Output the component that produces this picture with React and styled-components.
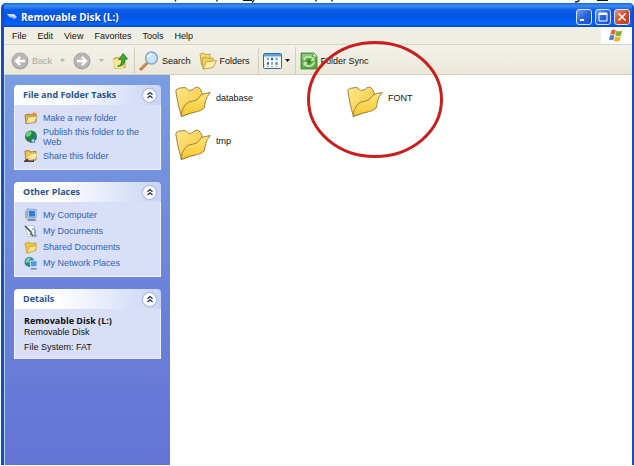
import React, { useState } from "react";
import styled, { createGlobalStyle } from "styled-components";

const menuItems = ["File", "Edit", "View", "Favorites", "Tools", "Help"];

const files = [
  { name: "database" },
  { name: "FONT", marked: true },
  { name: "tmp" },
];

const App = () => {
  const [closed, setClosed] = useState({});

  const togglePanel = (id) => {
    setClosed({ ...closed, [id]: !closed[id] });
  };

  return (
    <Page>
      <GlobalStyle />
      <TopStrip>
        <StripMarks />
      </TopStrip>
      <Window>
        <TitleBar>
          <DriveIcon />
          <h1>Removable Disk (L:)</h1>
          <WindowButton aria-label="Minimize">
            <svg viewBox="0 0 14 14">
              <path d="M3 10h4" stroke="#fff" strokeWidth="2" />
            </svg>
          </WindowButton>
          <WindowButton aria-label="Maximize">
            <svg viewBox="0 0 14 14">
              <path d="M3 3h8v8H3z" fill="none" stroke="#fff" />
              <path d="M3 4h8" stroke="#fff" strokeWidth="2" />
            </svg>
          </WindowButton>
          <WindowButton aria-label="Close" $close>
            <svg viewBox="0 0 14 14">
              <path
                d="M3.5 3.5l7 7M10.5 3.5l-7 7"
                stroke="#fff"
                strokeWidth="1.6"
              />
            </svg>
          </WindowButton>
        </TitleBar>

        <MenuBar>
          {menuItems.map((item) => (
            <MenuButton key={item}>{item}</MenuButton>
          ))}
          <FlagBox>
            <FlagIcon />
          </FlagBox>
        </MenuBar>

        <ToolBar>
          <ToolButton disabled>
            <ArrowIcon />
            Back
          </ToolButton>
          <DropButton aria-label="Back history" disabled>
            <Caret />
          </DropButton>
          <ToolButton aria-label="Forward" disabled>
            <ArrowIcon forward />
          </ToolButton>
          <DropButton aria-label="Forward history" disabled>
            <Caret />
          </DropButton>
          <ToolButton aria-label="Up">
            <UpIcon />
          </ToolButton>
          <Divider />
          <ToolButton>
            <SearchIcon />
            Search
          </ToolButton>
          <ToolButton $spaced>
            <FoldersIcon />
            Folders
          </ToolButton>
          <Divider $wide />
          <ToolButton aria-label="Views">
            <ViewsIcon />
            <Caret />
          </ToolButton>
          <Divider />
          <ToolButton>
            <SyncIcon />
            Folder Sync
          </ToolButton>
        </ToolBar>

        <Content>
          <Sidebar>
            <Panel
              title="File and Folder Tasks"
              closed={closed.tasks}
              onToggle={() => togglePanel("tasks")}
            >
              <LinkList>
                <li>
                  <SideLink href="#new">
                    <NewFolderIcon />
                    Make a new folder
                  </SideLink>
                </li>
                <li>
                  <SideLink href="#publish">
                    <GlobeIcon />
                    Publish this folder to the Web
                  </SideLink>
                </li>
                <li>
                  <SideLink href="#share">
                    <ShareIcon />
                    Share this folder
                  </SideLink>
                </li>
              </LinkList>
            </Panel>

            <Panel
              title="Other Places"
              closed={closed.places}
              onToggle={() => togglePanel("places")}
            >
              <LinkList>
                <li>
                  <SideLink href="#computer">
                    <ComputerIcon />
                    My Computer
                  </SideLink>
                </li>
                <li>
                  <SideLink href="#documents">
                    <DocumentsIcon />
                    My Documents
                  </SideLink>
                </li>
                <li>
                  <SideLink href="#shared">
                    <SharedIcon />
                    Shared Documents
                  </SideLink>
                </li>
                <li>
                  <SideLink href="#network">
                    <NetworkIcon />
                    My Network Places
                  </SideLink>
                </li>
              </LinkList>
            </Panel>

            <Panel
              title="Details"
              closed={closed.details}
              onToggle={() => togglePanel("details")}
            >
              <Details>
                <strong>Removable Disk (L:)</strong>
                <span>Removable Disk</span>
                <p>File System: FAT</p>
              </Details>
            </Panel>
          </Sidebar>

          <FileList>
            {files.map((file) => (
              <FileItem key={file.name}>
                <FileButton>
                  <FolderIcon id={file.name} />
                  <span>{file.name}</span>
                </FileButton>
                {file.marked && (
                  <Ring viewBox="0 0 136 117">
                    <ellipse cx="68" cy="58.5" rx="66.5" ry="57" />
                  </Ring>
                )}
              </FileItem>
            ))}
          </FileList>
        </Content>
      </Window>
    </Page>
  );
};

export default App;

const Panel = ({ title, closed, onToggle, children }) => (
  <PanelBox>
    <PanelHead>
      <h2>{title}</h2>
      <RoundButton aria-label={"Toggle " + title} onClick={onToggle}>
        <svg viewBox="0 0 8 8">
          <path
            d="M1.5 3.8L4 1.5l2.5 2.3M1.5 7L4 4.7L6.5 7"
            fill="none"
            stroke="#1c2c50"
            strokeWidth="1.2"
          />
        </svg>
      </RoundButton>
    </PanelHead>
    {!closed && <PanelBody>{children}</PanelBody>}
  </PanelBox>
);

// Icons
const StripMarks = () => (
  <svg width="634" height="3" viewBox="0 0 634 3" aria-hidden="true">
    <path
      d="M175.5 0v1.5M217 0v1.5M316 0v1.5M332 0v1.5M254 0l-2 2.5M579 0q0 2-4 2"
      stroke="#222"
      strokeWidth="1.4"
      fill="none"
    />
    <path d="M243 0h9v1h-9zM597 0h11v1h-11z" fill="#111" />
  </svg>
);

const DriveIcon = () => (
  <svg width="12" height="12" viewBox="0 0 12 12">
    <path d="M1 3l7 0 3 3-2 2-6-2z" fill="#9fb4ee" />
    <path d="M1 3l7 .5 2.5 2.5-7-1.5z" fill="#dfe6fb" />
  </svg>
);

const FlagIcon = () => (
  <svg width="16" height="15" viewBox="0 0 16 15">
    <path d="M3.4 2.2q2.4-1.6 4.4 0L6.6 7Q4.4 5.6 2.2 7z" fill="#e0673a" />
    <path d="M8.5 2.6q2.5 1.6 5.7 0L13 7.4q-3 1.6-5.7 0z" fill="#7db13c" />
    <path d="M2 7.7q2.2-1.5 4.4 0L5.2 12.5Q3 11.2.8 12.5z" fill="#4d7fd0" />
    <path d="M7.1 8.2q2.8 1.5 5.7 0L11.6 13q-3 1.6-5.7 0z" fill="#efb62b" />
  </svg>
);

const ArrowIcon = ({ forward }) => (
  <svg width="18" height="18" viewBox="0 0 18 18">
    <circle cx="9" cy="9" r="8.5" fill="#a3a3a1" />
    <circle cx="9" cy="8.5" r="7.4" fill="#b6b6b4" />
    <path
      d={
        forward
          ? "M4 9h8.5M8.8 4.8L13 9l-4.2 4.2"
          : "M14 9H5.5M9.2 4.8L5 9l4.2 4.2"
      }
      fill="none"
      stroke="#fff"
      strokeWidth="2.4"
    />
  </svg>
);

const Caret = () => (
  <svg width="5" height="3" viewBox="0 0 5 3">
    <path d="M0 0h5L2.5 3z" fill="currentColor" />
  </svg>
);

const UpIcon = () => (
  <svg width="17" height="18" viewBox="0 0 18 18">
    <path d="M2 6l5-1 1 1.5 6-.5v10l-11 1z" fill="#f3d35b" stroke="#a98a2c" strokeWidth=".7" />
    <path d="M2 8l10-1v9.5L3 17z" fill="#fbe995" />
    <path
      d="M6 14.5q4.5-1 4.2-7H7L11.8 1 16.5 7h-3.2q.7 8-7.3 7.5z"
      fill="#3fab35"
      stroke="#1d6e20"
      strokeWidth=".8"
    />
  </svg>
);

const SearchIcon = () => (
  <svg width="20" height="20" viewBox="0 0 20 20">
    <path d="M8.5 11.5L2 18" stroke="#b8763a" strokeWidth="3" strokeLinecap="round" />
    <path d="M8 11.5L2 17.3" stroke="#e7b47b" strokeWidth="1" />
    <circle cx="12.5" cy="7" r="5.9" fill="#c9e4f8" stroke="#7fa6cf" strokeWidth="1.5" />
    <path d="M9 6q1-3 4-3.2" stroke="#fff" strokeWidth="1.8" fill="none" />
  </svg>
);

const FoldersIcon = () => (
  <svg width="18" height="18" viewBox="0 0 18 18">
    <path d="M1 2l4-1 1.5 1.5L11 2v8l-8.5 3z" fill="#f6dc6e" stroke="#b9973a" strokeWidth=".8" />
    <path d="M3 6l4-1 1.5 1.5L14 6v9l-10 2z" fill="#f3d25a" stroke="#b9973a" strokeWidth=".8" />
    <path d="M4.5 17l2.5-7L17.5 8.5 14 15.5z" fill="#fdf0a4" stroke="#b9973a" strokeWidth=".8" />
  </svg>
);

const ViewsIcon = () => (
  <svg width="19" height="16" viewBox="0 0 19 16">
    <rect x=".5" y=".5" width="18" height="15" rx="1" fill="#f7fafc" stroke="#2f6aa8" />
    <path d="M1 2.2h17" stroke="#5d9ede" strokeWidth="2.6" />
    <path d="M4 6h2M12.5 6h2M8 10.5h2" stroke="#7fa0c4" strokeWidth="2.5" />
    <path d="M8 6h2M4 10.5h2M12.5 10.5h2" stroke="#37639a" strokeWidth="2.5" />
    <path d="M4 13.5h2M8 13.5h2M12.5 13.5h2" stroke="#b9a06a" strokeWidth="1" />
  </svg>
);

const SyncIcon = () => (
  <svg width="18" height="18" viewBox="0 0 18 18">
    <path d="M1 1h13l3 3v13H1z" fill="#5aa743" stroke="#3c8330" strokeWidth=".8" />
    <path d="M2 2h11l-2 3-9 2z" fill="#8acb6e" />
    <path d="M13.5 1l3.5 3.5h-3.5z" fill="#dff0d6" />
    <path
      d="M3.8 8.5A5.4 5 0 0 1 13 6.5M14.2 10A5.4 5 0 0 1 5 12.5"
      fill="none"
      stroke="#c3e6b0"
      strokeWidth="1.8"
    />
    <path d="M14.5 4.5v4.5H10zM3.5 14.5V10H8z" fill="#c3e6b0" />
    <circle cx="9" cy="9.5" r="2" fill="#39802b" />
  </svg>
);

const NewFolderIcon = () => (
  <svg width="14" height="14" viewBox="0 0 14 14">
    <path d="M1 4l4-1 1 1 6-1v8l-10 1.5z" fill="#dcae45" stroke="#96712a" strokeWidth=".8" />
    <path d="M2 12.5l2-6.5 9-1-2 6.5z" fill="#fae6a0" stroke="#a8822f" strokeWidth=".6" />
    <path d="M10 0l.9 2.1L13.5 3l-2.6.9L10 6l-.9-2.1L6.500 3l2.6-.9z" fill="#f08a3c" />
  </svg>
);

const GlobeIcon = () => (
  <svg width="14" height="14" viewBox="0 0 14 14">
    <circle cx="7" cy="6.5" r="6" fill="#23833f" />
    <path d="M3 2.5q3-2 5 0L6 6 2.5 7q-1.500-2 .5-4.500z" fill="#6fd07f" />
    <path d="M9 4l3 1v4l-3 1z" fill="#2a6fa8" />
    <path d="M6 10h5v2.5H6z" fill="#2f5c8c" />
    <circle cx="9" cy="10.5" r="1.6" fill="#a8d8e8" />
  </svg>
);

const ShareIcon = () => (
  <svg width="14" height="14" viewBox="0 0 14 14">
    <path d="M1 2l4-.5 1 1.5 6-.5V11L2 12z" fill="#f0c64d" stroke="#8d6c22" strokeWidth=".8" />
    <path d="M3 9l5-4 5-.5-2 6z" fill="#fbe9a5" />
    <path d="M0 12q3-3 6-2l4 .5v2.5H0z" fill="#4b4033" />
    <path d="M4 10.5l5 .2" stroke="#f4c49c" strokeWidth="1.4" />
  </svg>
);

const ComputerIcon = () => (
  <svg width="14" height="14" viewBox="0 0 14 14">
    <path d="M3 1l9 .5v8L4 10z" fill="#dfe8f2" stroke="#7690b5" strokeWidth=".8" />
    <path d="M4.5 2.5l6.5.2v5.8l-6 .3z" fill="#2f7fd6" />
    <path d="M1 3l2-1v8l-2 1z" fill="#9fb3cd" />
    <path d="M3 11l8-.5 1.5 2.5H4z" fill="#7d8fac" />
  </svg>
);

const DocumentsIcon = () => (
  <svg width="14" height="14" viewBox="0 0 14 14">
    <path d="M1 2l9-.5 2.5 11H4z" fill="#f1f6f7" stroke="#9fb0bd" strokeWidth=".6" />
    <path d="M1 2l7 7" stroke="#44545c" strokeWidth="1.6" />
    <path d="M8 5h3M8 12h4.5M11 6v6" stroke="#5f89a1" strokeWidth="1.2" />
    <path d="M6 9.5l3 2" stroke="#3f7950" strokeWidth="1.8" />
  </svg>
);

const SharedIcon = () => (
  <svg width="14" height="14" viewBox="0 0 14 14">
    <path d="M1 3.5L5 2l1.5 1.5L12 3v7L3 13z" fill="#f2c23b" stroke="#c08f23" strokeWidth=".7" />
    <path d="M3 13l2-6 8-1.5-2 5z" fill="#fde48c" stroke="#c89a2c" strokeWidth=".6" />
  </svg>
);

const NetworkIcon = () => (
  <svg width="14" height="14" viewBox="0 0 14 14">
    <circle cx="5.5" cy="6" r="5" fill="#2e8b9d" />
    <path d="M2 4q2-3 4.5-2L5 6 1.5 7z" fill="#7fd0a0" />
    <path d="M6 5l7-.5v6L7 11z" fill="#4f9ae4" stroke="#dce8f5" strokeWidth=".9" />
    <path d="M6.5 12h6l.5 1.5H7z" fill="#7187ad" />
  </svg>
);

const FolderIcon = ({ id }) => (
  <svg width="36" height="32" viewBox="0 0 36 32">
    <defs>
      <linearGradient id={"back-" + id} x1="0" y1="0" x2="1" y2="1">
        <stop offset="0" stopColor="#ffe889" />
        <stop offset="1" stopColor="#f4c338" />
      </linearGradient>
      <linearGradient id={"front-" + id} x1="0" y1="0" x2="0" y2="1">
        <stop offset="0" stopColor="#ffe679" />
        <stop offset="1" stopColor="#f9c62c" />
      </linearGradient>
    </defs>
    <path
      d="M.8 5Q1 3 3.5 2.3L9 1.5q2.5 0 3.5 2 1 1.3 3 .8L18 3.5q1.5-2.300 3.500-2.300 3 0 4 2.300L27 6.500l.5 16L6.500 30.500Q3 20 .8 5z"
      fill={"url(#back-" + id + ")"}
      stroke="#8f783c"
      strokeWidth=".9"
    />
    <path
      d="M6 30.500Q6.500 22.500 10.500 18.500q2.500-3 8-3.500 4-.5 6-4 1.500-2.800 4.500-3.200L35.200 6.500q-3.500 4-4.500 8-.8 4-1.500 7.500-2.500 2.500-6.700 3.500-8 1.500-16.500 5z"
      fill={"url(#front-" + id + ")"}
      stroke="#8f783c"
      strokeWidth=".9"
    />
  </svg>
);

// Styled Components
const GlobalStyle = createGlobalStyle`
  * {
    box-sizing: border-box;
  }

  body {
    margin: 0;
    background: #f2fdff;
  }

  body, button {
    font-family: "Liberation Sans", Arial, sans-serif;
    font-size: 9px;
    line-height: 10px;
    color: #111;
  }

  h1, h2, strong {
    font-family: "Open Sans", Tahoma, sans-serif;
    font-weight: 700;
  }

  button {
    border: 0;
    padding: 0;
    background: none;
  }

  svg {
    display: block;
    flex-shrink: 0;
  }
`;

const Page = styled.div`
  display: flex;
  flex-direction: column;
  min-height: 100vh;
  padding: 0 0 1px 1px;
`;

const TopStrip = styled.div`
  height: 3px;
  margin-left: -1px;
  overflow: hidden;
`;

const Window = styled.div`
  flex: 1;
  display: flex;
  flex-direction: column;
  border: solid #1a4cc0;
  border-width: 0 2px 0 3px;
  border-radius: 5px 5px 0 0;
  background: #0a53e4;
`;

const TitleBar = styled.header`
  display: flex;
  align-items: center;
  gap: 3px;
  height: 24px;
  padding: 3px 2px 0 2px;
  border-radius: 4px 4px 0 0;
  background: linear-gradient(
    #2368c8 0,
    #3a8cf2 3px,
    #0a5be6 7px,
    #0355e6 14px,
    #0662fb 21px,
    #0347c4 24px
  );

  h1 {
    flex: 1;
    margin: 0;
    font-size: 10px;
    line-height: 12px;
    color: #fff;
    text-shadow: 1px 1px #0a3c9c;
  }
`;

const WindowButton = styled.button`
  width: 16px;
  height: 16px;
  border: 1px solid #d5e2fb;
  border-radius: 3px;
  background: ${({ $close }) =>
    $close
      ? "linear-gradient(135deg, #e59078, #d2502c 50%, #b43c1c)"
      : "linear-gradient(135deg, #6f9cf5, #2a62dc 50%, #1c4fc8)"};
`;

const MenuBar = styled.nav`
  display: flex;
  align-items: center;
  gap: 11px;
  height: 18px;
  padding-left: 7px;
  border-left: 1px solid #f5f6ee;
  border-bottom: 1px solid #d8d5c6;
  background: #efeee2;
`;

const MenuButton = styled.button`
  &:hover {
    color: #1b4fb5;
  }
`;

const FlagBox = styled.div`
  display: flex;
  align-items: center;
  justify-content: center;
  align-self: stretch;
  width: 31px;
  margin-left: auto;
  padding-right: 1px;
  background: #fff;
`;

const ToolBar = styled.div`
  display: flex;
  align-items: center;
  gap: 4px;
  height: 30px;
  padding: 2px 6px 0;
  border-left: 1px solid #f5f6ee;
  border-bottom: 1px solid #d3d0c0;
  background: linear-gradient(#f3f2ea, #ebe8d8);
`;

const ToolButton = styled.button`
  display: flex;
  align-items: center;
  gap: 3px;
  margin-left: ${({ $spaced }) => ($spaced ? "4px" : "0")};

  &:disabled {
    color: #aaa89c;
  }
`;

const DropButton = styled.button`
  display: flex;
  justify-content: center;
  width: 13px;

  &:disabled {
    color: #b5b3a6;
  }
`;

const Divider = styled.span`
  width: 1px;
  height: 27px;
  margin-left: ${({ $wide }) => ($wide ? "4px" : "1px")};
  background: #d2cfbf;
`;

const Content = styled.div`
  flex: 1;
  display: flex;
  border-left: 1px solid #b7d0f5;
`;

const Sidebar = styled.aside`
  display: flex;
  flex-direction: column;
  gap: 12px;
  width: 165px;
  padding: 10px 9px;
  background: linear-gradient(#7b9de3, #6b83da 55%, #6474d5);
`;

const PanelBox = styled.section`
  border-radius: 4px 4px 0 0;
  overflow: hidden;
`;

const PanelHead = styled.div`
  display: flex;
  align-items: center;
  justify-content: space-between;
  height: 20px;
  padding: 0 5px 0 9px;
  background: linear-gradient(90deg, #fff 30%, #c9d4f6);

  h2 {
    margin: 0;
    font-size: 9px;
    line-height: 12px;
    color: #26538f;
  }
`;

const RoundButton = styled.button`
  display: flex;
  align-items: center;
  justify-content: center;
  width: 13px;
  height: 13px;
  border-radius: 50%;
  background: #fff;
  box-shadow: 0 0 1px 1px #a9b6d8;

  svg {
    width: 8px;
    height: 8px;
  }
`;

const PanelBody = styled.div`
  padding: 6px 9px;
  border: 1px solid #eef2fd;
  border-top: 0;
  background: #d8dff7;
`;

const LinkList = styled.ul`
  display: flex;
  flex-direction: column;
  gap: 2px;
  margin: 0;
  padding: 0;
  list-style: none;
`;

const SideLink = styled.a`
  display: flex;
  align-items: center;
  gap: 5px;
  color: #2f5fb5;
  text-decoration: none;

  &:hover {
    text-decoration: underline;
  }
`;

const Details = styled.div`
  display: flex;
  flex-direction: column;

  strong {
    line-height: 12px;
  }

  p {
    margin: 5px 0 0;
  }
`;

const FileList = styled.ul`
  flex: 1;
  display: grid;
  grid-template-columns: repeat(auto-fill, 172px);
  align-content: start;
  row-gap: 11px;
  margin: 0;
  padding: 11px 0 0 5px;
  list-style: none;
  background: #fff;
`;

const FileItem = styled.li`
  position: relative;
`;

const FileButton = styled.button`
  display: flex;
  align-items: center;
  gap: 5px;

  span {
    padding-bottom: 8px;
  }
`;

const Ring = styled.svg`
  position: absolute;
  top: -45px;
  left: -40px;
  width: 136px;
  height: 117px;
  pointer-events: none;

  ellipse {
    fill: none;
    stroke: #c81e1e;
    stroke-width: 3;
  }
`;
